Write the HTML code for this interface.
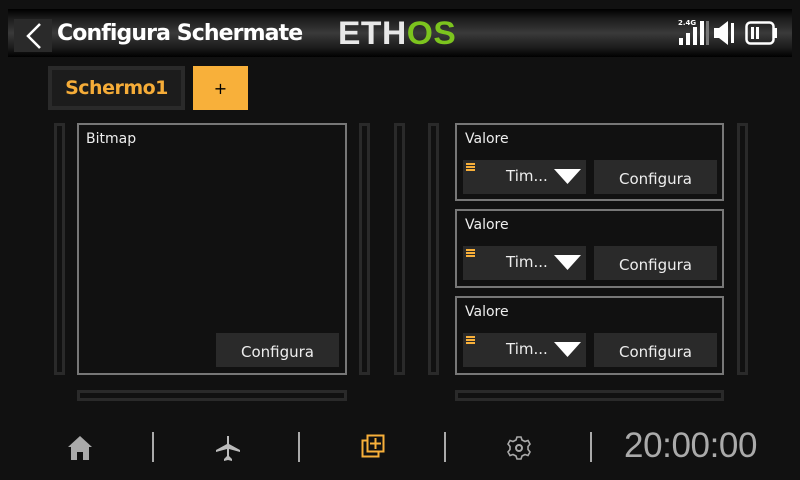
<!DOCTYPE html>
<html><head><meta charset="utf-8"><style>
*{margin:0;padding:0;box-sizing:border-box}
body{width:800px;height:480px;background:#111;position:relative;overflow:hidden;font-family:"DejaVu Sans","Liberation Sans",sans-serif;color:#eee}
.a{position:absolute}
.hdr{left:8px;top:9px;width:784px;height:48px;background:linear-gradient(#000 0%,#1c1c1c 20%,#3a3a3a 50%,#1c1c1c 80%,#000 100%)}
.box{border:2px solid #777}
.bar{border:3px solid #2a2a2a}
.btn{background:#2a2a2a;color:#eee;font-size:15px;text-align:center;line-height:34px}
.lbl{font-size:14px;color:#eee}
</style></head><body>
<div class="a hdr"></div>
<div class="a" style="left:14px;top:19px;width:38px;height:33px;background:#2a2a2a"></div>
<svg class="a" style="left:14px;top:19px" width="38" height="33"><path d="M26 5 L14 17 L26 29" stroke="#fff" stroke-width="2.5" fill="none"/></svg>
<div class="a" style="left:57px;top:21px;font-size:22px;font-weight:bold;color:#fff;letter-spacing:-0.9px">Configura Schermate</div>
<div class="a" style="left:338px;top:15px;font-size:32px;font-weight:bold;font-family:'Liberation Sans',sans-serif;letter-spacing:0.5px;color:#e8e8e8;transform:scaleX(1.05);transform-origin:left">ETH<span style="color:#7cc41e">OS</span></div>
<div class="a" style="left:678px;top:19px;font-size:7px;color:#fff;font-weight:bold">2.4G</div>
<div class="a" style="left:679px;top:38px;width:4px;height:7px;background:#fff"></div>
<div class="a" style="left:686px;top:33px;width:4px;height:12px;background:#fff"></div>
<div class="a" style="left:693px;top:27px;width:4px;height:18px;background:#fff"></div>
<div class="a" style="left:700px;top:21px;width:4px;height:24px;background:#fff"></div>
<div class="a" style="left:706px;top:21px;width:3px;height:24px;background:#777"></div>
<svg class="a" style="left:712px;top:20px" width="30" height="26"><path d="M2 8 H7 L16 1 V25 L7 18 H2 Z" fill="#fff"/><rect x="19" y="3" width="3" height="20" fill="#fff"/></svg>
<svg class="a" style="left:745px;top:20px" width="34" height="26"><rect x="1.5" y="2.5" width="27" height="21" rx="4" fill="none" stroke="#fff" stroke-width="2.5"/><rect x="29" y="8" width="3" height="10" fill="#fff"/><rect x="6" y="7" width="3" height="12" fill="#fff"/><rect x="11" y="7" width="3" height="12" fill="#fff"/></svg>

<div class="a" style="left:48px;top:66px;width:137px;height:44px;background:#2a2a2a"></div>
<div class="a" style="left:52px;top:70px;width:129px;height:36px;background:#1c1c1c;color:#f5ac38;font-size:19px;font-weight:bold;text-align:center;line-height:36px;letter-spacing:-0.5px">Schermo1</div>
<div class="a" style="left:193px;top:66px;width:55px;height:44px;background:#f8b03a;color:#000;font-size:16px;text-align:center;line-height:46px">+</div>

<div class="a bar" style="left:54px;top:123px;width:11px;height:252px"></div>
<div class="a bar" style="left:359px;top:123px;width:11px;height:252px"></div>
<div class="a bar" style="left:394px;top:123px;width:11px;height:252px"></div>
<div class="a bar" style="left:428px;top:123px;width:11px;height:252px"></div>
<div class="a bar" style="left:737px;top:123px;width:11px;height:252px"></div>
<div class="a bar" style="left:77px;top:390px;width:270px;height:11px"></div>
<div class="a bar" style="left:455px;top:390px;width:269px;height:11px"></div>

<div class="a box" style="left:77px;top:123px;width:270px;height:252px"></div>
<div class="a lbl" style="left:86px;top:131px">Bitmap</div>
<div class="a btn" style="left:216px;top:333px;width:123px;height:34px;line-height:38px">Configura</div>

<div class="a box" style="left:455px;top:123px;width:269px;height:78px"></div>
<div class="a box" style="left:455px;top:209px;width:269px;height:79px"></div>
<div class="a box" style="left:455px;top:296px;width:269px;height:79px"></div>

<div class="a lbl" style="left:465px;top:131px">Valore</div>
<div class="a lbl" style="left:465px;top:217px">Valore</div>
<div class="a lbl" style="left:465px;top:304px">Valore</div>

<div class="a btn" style="left:463px;top:160px;width:123px;height:34px"></div>
<div class="a btn" style="left:463px;top:246px;width:123px;height:34px"></div>
<div class="a btn" style="left:463px;top:333px;width:123px;height:34px"></div>
<div class="a btn" style="left:594px;top:160px;width:123px;height:34px;line-height:38px">Configura</div>
<div class="a btn" style="left:594px;top:246px;width:123px;height:34px;line-height:38px">Configura</div>
<div class="a btn" style="left:594px;top:333px;width:123px;height:34px;line-height:38px">Configura</div>

<div class="a" style="left:466px;top:163px;width:9px;height:8px;background:repeating-linear-gradient(#f8b03a 0 2px,transparent 2px 3px)"></div>
<div class="a" style="left:466px;top:249px;width:9px;height:8px;background:repeating-linear-gradient(#f8b03a 0 2px,transparent 2px 3px)"></div>
<div class="a" style="left:466px;top:336px;width:9px;height:8px;background:repeating-linear-gradient(#f8b03a 0 2px,transparent 2px 3px)"></div>
<div class="a" style="left:506px;top:167px;font-size:15px">Tim...</div>
<div class="a" style="left:506px;top:253px;font-size:15px">Tim...</div>
<div class="a" style="left:506px;top:340px;font-size:15px">Tim...</div>
<svg class="a" style="left:554px;top:169px" width="28" height="16"><path d="M0 0H27L13.5 15Z" fill="#fff"/></svg>
<svg class="a" style="left:554px;top:255px" width="28" height="16"><path d="M0 0H27L13.5 15Z" fill="#fff"/></svg>
<svg class="a" style="left:554px;top:342px" width="28" height="16"><path d="M0 0H27L13.5 15Z" fill="#fff"/></svg>

<svg class="a" style="left:66px;top:434px" width="30" height="27"><path d="M2 13 L14 2 L26 13 L23 13 L23 26 L17 26 L17 18 L11 18 L11 26 L5 26 L5 13Z" fill="#aaa"/></svg>
<div class="a" style="left:152px;top:432px;width:2px;height:30px;background:#aaa"></div>
<svg class="a" style="left:214px;top:435px" width="28" height="27"><path d="M13 1 h2 v8 l11 6 v2 l-11 -3 v7 l3 3 v2 l-4 -1 l-4 1 v-2 l3 -3 v-7 l-11 3 v-2 l11 -6 z" fill="#bbb"/></svg>
<div class="a" style="left:298px;top:432px;width:2px;height:30px;background:#aaa"></div>
<svg class="a" style="left:361px;top:434px" width="26" height="26"><rect x="1.5" y="6.5" width="16" height="16" fill="none" stroke="#f8b03a" stroke-width="2"/><rect x="6.5" y="1.5" width="16" height="16" fill="#111" stroke="#f8b03a" stroke-width="2"/><path d="M14.5 4v11M9 9.5h11" stroke="#f8b03a" stroke-width="2"/></svg>
<div class="a" style="left:444px;top:432px;width:2px;height:30px;background:#aaa"></div>
<svg class="a" style="left:506px;top:435px" width="26" height="26"><circle cx="13" cy="13" r="3" fill="none" stroke="#aaa" stroke-width="2"/><path d="M11 2h4l1 3 3 1.5 3-1 2 3.5-2 2.5v3l2 2.5-2 3.5-3-1-3 1.5-1 3h-4l-1-3-3-1.5-3 1-2-3.5 2-2.5v-3l-2-2.5 2-3.5 3 1 3-1.5z" fill="none" stroke="#aaa" stroke-width="1.6"/></svg>
<div class="a" style="left:590px;top:432px;width:2px;height:30px;background:#aaa"></div>
<div class="a" style="left:624px;top:426px;font-size:35px;color:#aaa;font-family:'Liberation Sans',sans-serif;letter-spacing:-0.4px">20:00:00</div>
</body></html>
